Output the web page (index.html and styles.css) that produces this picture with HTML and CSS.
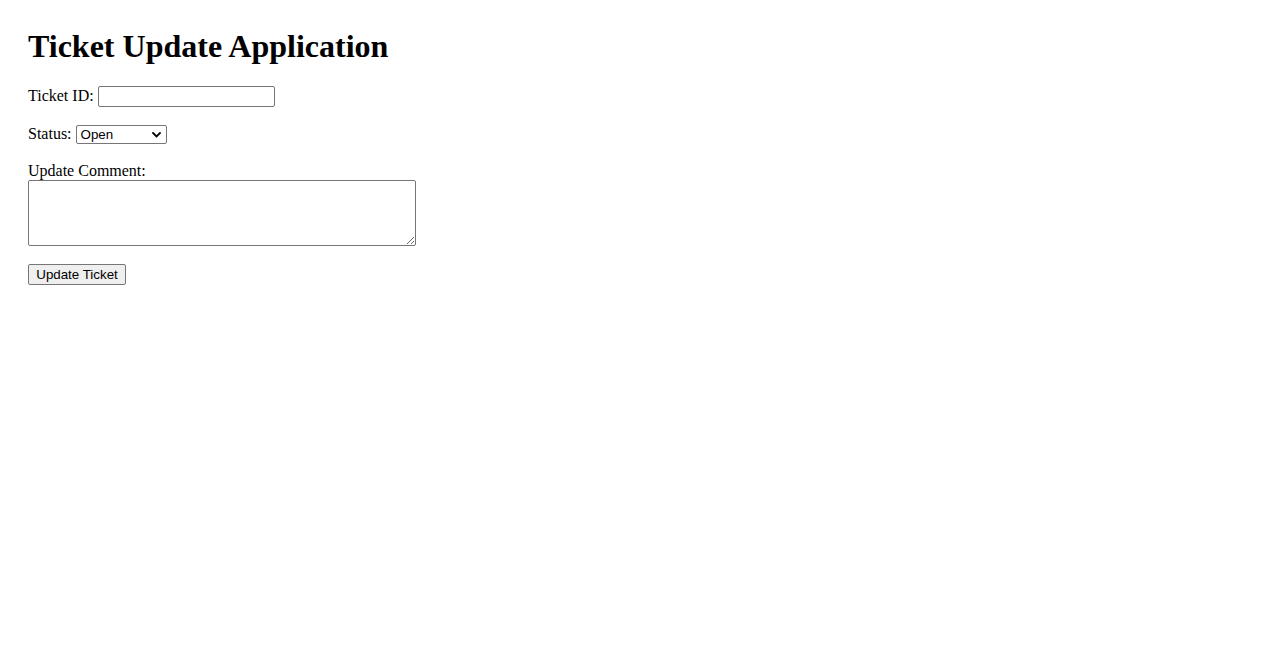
FILE: index.html
```html
<!DOCTYPE html>
<html lang="en">
<head>
<meta charset="utf-8">
<title>Ticket Update Application</title>
<link rel="stylesheet" href="styles.css">
</head>
<body>
<div class="app">
  <h1 class="title">Ticket Update Application</h1>
  <form class="form">
    <div class="row row-id">
      <label for="ticketId">Ticket ID:</label>
      <input class="text-input" type="text" id="ticketId">
    </div>
    <div class="row row-status">
      <label for="status">Status:</label>
      <span class="select-wrap">
        <select class="select" id="status">
          <option>Open</option>
          <option>In Progress</option>
          <option>Closed</option>
        </select>
        <svg class="chevron" width="9" height="6" viewBox="0 0 9 6" aria-hidden="true">
          <path d="M1 1 L4.5 4.5 L8 1" fill="none" stroke="#000" stroke-width="1.8" stroke-linecap="square"/>
        </svg>
      </span>
    </div>
    <div class="row row-comment">
      <label class="block-label" for="comment">Update Comment:</label>
      <textarea class="textarea" id="comment"></textarea>
    </div>
    <button class="button" type="button">Update Ticket</button>
  </form>
</div>
</body>
</html>
```

FILE: styles.css
```css
html, body {
  margin: 0;
  padding: 0;
  background: #ffffff;
}

body {
  font-family: "Liberation Serif", "Times New Roman", serif;
  font-size: 16px;
  color: #000000;
}

.app {
  padding: 28px;
}

.title {
  margin: 0 0 21.44px 0;
  font-size: 32px;
  font-weight: bold;
}

.form {
  margin: 0;
}

.row-id {
  margin-bottom: 18px;
}

.row-status {
  margin-bottom: 18px;
}

.row-comment {
  margin-bottom: 14px;
}

.block-label {
  display: block;
}

.text-input,
.select,
.textarea,
.button {
  font-family: "Liberation Sans", Arial, sans-serif;
  font-size: 13.333px;
  box-sizing: border-box;
  border: 1px solid #767676;
  border-radius: 2px;
  background: #ffffff;
  color: #000000;
}

.text-input {
  width: 177px;
  height: 21px;
  padding: 1px 2px;
}

.select-wrap {
  position: relative;
  display: inline-block;
}

.select {
  -webkit-appearance: none;
  appearance: none;
  width: 91px;
  height: 19px;
  padding: 0 16px 0 4px;
  line-height: 17px;
}

.chevron {
  position: absolute;
  right: 6px;
  top: 50%;
  margin-top: -3px;
  pointer-events: none;
}

.textarea {
  display: inline-block;
  vertical-align: baseline;
  width: 388px;
  height: 66px;
  padding: 2px;
  resize: both;
  font-family: "Liberation Mono", monospace;
}

.button {
  width: 98px;
  height: 21px;
  padding: 1px 6px;
  background: #efefef;
  border-radius: 2px;
}
```
